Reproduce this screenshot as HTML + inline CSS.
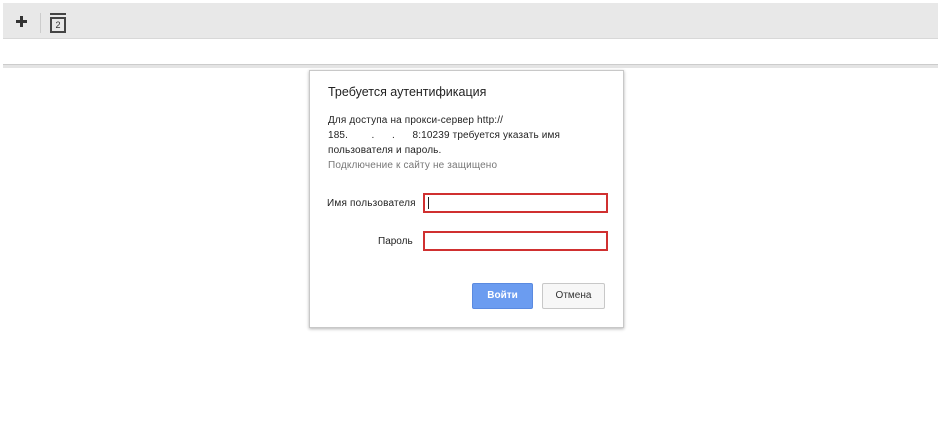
<!DOCTYPE html>
<html><head><meta charset="utf-8"><style>
body{margin:0;width:938px;height:432px;background:#fff;position:relative;overflow:hidden;font-family:"Liberation Sans","Noto Sans CJK SC",sans-serif;}
.bar{position:absolute;left:3px;top:3px;width:935px;height:35px;background:#e8e8e8;border-bottom:1px solid #d8d8d8;}
.line{position:absolute;left:3px;top:64px;width:935px;height:3px;background:#e4e4e4;border-top:1px solid #ccc;}
.dlg{position:absolute;left:309px;top:70px;width:313px;height:256px;background:#fff;border:1px solid #c8c8c8;box-shadow:0 1px 3px rgba(0,0,0,.3);}
.t{position:absolute;font-size:12px;color:#222;}
.s{font-size:10px;line-height:15px;color:#222;letter-spacing:0.15px;}
.in{position:absolute;left:113px;width:181px;height:16px;border:2px solid #d03030;background:#fff;}
.btn{position:absolute;top:212px;height:24px;border-radius:2px;font-size:10px;text-align:center;line-height:24px;}
</style></head><body>
<div class="bar">
<div style="position:absolute;left:13px;top:17px;width:11px;height:3px;background:#333"></div>
<div style="position:absolute;left:17px;top:13px;width:3px;height:11px;background:#333"></div>
<div style="position:absolute;left:37px;top:10px;width:1px;height:20px;background:#ccc"></div>
<div style="position:absolute;left:47px;top:10px;width:16px;height:2px;background:#444"></div>
<div style="position:absolute;left:47px;top:14px;width:12px;height:12px;border:2px solid #444;font-size:9px;text-align:center;line-height:12px;color:#333">2</div>
</div>
<div class="line"></div>
<div class="dlg">
<div class="t" style="left:18px;top:14px;font-size:12.5px;">Требуется аутентификация</div>
<div class="t s" style="left:18px;top:42px;">Для доступа на прокси-сервер http://<br>185.&nbsp;&nbsp;&nbsp;&nbsp;&nbsp;&nbsp;&nbsp;&nbsp;.&nbsp;&nbsp;&nbsp;&nbsp;&nbsp;&nbsp;.&nbsp;&nbsp;&nbsp;&nbsp;&nbsp;&nbsp;8:10239 требуется указать имя<br>пользователя и пароль.<br><span style="color:#777">Подключение к сайту не защищено</span></div>
<div class="t" style="left:17px;top:127px;font-size:10px;letter-spacing:0.2px;">Имя пользователя</div>
<div class="in" style="top:122px;"><div style="position:absolute;left:3px;top:2px;width:1px;height:12px;background:#222"></div></div>
<div class="t" style="left:68px;top:165px;font-size:10px;">Пароль</div>
<div class="in" style="top:160px;"></div>
<div class="btn" style="left:162px;width:59px;background:#6b9cf0;color:#fff;font-weight:bold;border:1px solid #5a8ae0;">Войти</div>
<div class="btn" style="left:232px;width:61px;background:#f7f7f7;color:#333;border:1px solid #c8c8c8;">Отмена</div>
</div>
</body></html>
